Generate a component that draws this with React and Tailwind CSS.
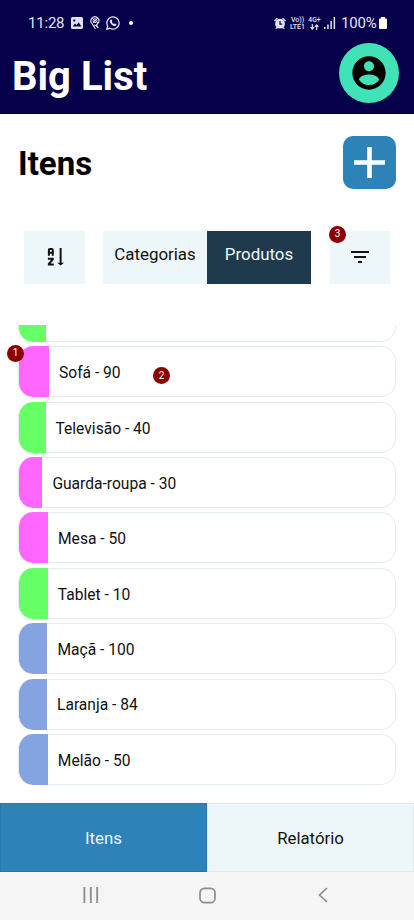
import React from "react";

const items = [
  { label: "Sofá - 90", color: "bg-[#ff66ff]", width: "w-[31px]" },
  { label: "Televisão - 40", color: "bg-[#66ff66]", width: "w-[27.5px]" },
  { label: "Guarda-roupa - 30", color: "bg-[#ff66ff]", width: "w-[24.4px]" },
  { label: "Mesa - 50", color: "bg-[#ff66ff]", width: "w-[30px]" },
  { label: "Tablet - 10", color: "bg-[#66ff66]", width: "w-[29.8px]" },
  { label: "Maçã - 100", color: "bg-[#85a3e0]", width: "w-[29.4px]" },
  { label: "Laranja - 84", color: "bg-[#85a3e0]", width: "w-[29px]" },
  { label: "Melão - 50", color: "bg-[#85a3e0]", width: "w-[29.8px]" },
];

function Marker({ children, place }) {
  return (
    <span
      className={`absolute flex h-[17px] w-[17px] items-center justify-center rounded-full bg-[#8b0000] text-[10px] leading-none text-white ${place}`}
    >
      {children}
    </span>
  );
}

function ItemCard({ label, color, width }) {
  return (
    <div className="flex h-[51px] w-full shrink-0">
      <div className={`shrink-0 rounded-l-[15px] border-l border-[#e4ecee] ${color} ${width}`} />
      <div className="flex flex-1 items-center rounded-r-[15px] border border-l-0 border-[#e4ecee] pl-[10px] pt-[4px] text-[15.600px]">
        {label}
      </div>
    </div>
  );
}

function StatusBar() {
  return (
    <div className="flex h-[46px] items-center pl-[28px] pr-[27px] text-[15.5px] text-[#e4e0f4]">
      <span className="mt-[1px] w-[43px] text-[15px] tracking-[-0.2px]">11:28</span>
      <svg className="h-3 w-3" viewBox="0 0 12 12" fill="currentColor">
        <path fillRule="evenodd" d="M1.5 0h9A1.5 1.5 0 0 1 12 1.500v9a1.500 1.500 0 0 1-1.500 1.500h-9A1.500 1.500 0 0 1 0 10.500v-9A1.500 1.500 0 0 1 1.500 0zM1.700 9.500h8.700L7.700 5.300 5.500 8 4 6.500zM2.300 2.500v2h1.900v-2z" />
      </svg>
      <svg className="ml-[7px] h-[14px] w-[10px]" viewBox="0 0 10 14" fill="none" stroke="currentColor">
        <path strokeWidth="1.200" d="M5.500 13 2 7.600A4 4 0 1 1 8.600 6.500L6 9.500 8.300 12" />
        <circle cx="5" cy="4.600" r="1.900" />
        <path d="M2 2l6 5M7.500 2 3 7.200M4 9l3.500 1" />
      </svg>
      <svg className="ml-[6px] h-[14px] w-[14px]" viewBox="0 0 14 14" fill="none" stroke="currentColor">
        <path strokeWidth="1.300" d="M.8 13.200 1.700 10A6.100 6.100 0 1 1 4 12.300z" />
        <path fill="currentColor" stroke="none" d="M4.600 3.700c.4-.4 1-.3 1.200.2l.5 1.100c.1.300-.4.800-.4 1 .4.900 1.100 1.600 2 2 .3.100.7-.6 1-.5l1.200.6c.5.300.2 1-.2 1.400-.6.600-1.500.7-2.600.2C5.700 9 4.600 7.900 4 6.300c-.3-1-.2-2 .6-2.600z" />
      </svg>
      <span className="ml-[9px] h-[4px] w-[4px] rounded-full bg-white" />
      <svg className="ml-auto h-[13px] w-[12px]" viewBox="0 0 12 13">
        <g fill="currentColor">
          <circle cx="6" cy="6.700" r="4.900" />
          <path d="M0 3.500 3 .8l1 1L.8 4.500zM12 3.500 9 .8l-1 1 3.200 2.700zM1 12.200l1.800-2.500 1.500 1.200zM11 12.200 9.200 9.700l-1.500 1.200z" />
        </g>
        <path d="M6 3.900v3.200h2.200" fill="none" stroke="#06004b" strokeWidth="1.200" />
      </svg>
      <span className="ml-[3.5px] mt-[2px] flex w-[16px] flex-col items-center gap-[0.5px] text-[7px] font-medium leading-[7px]">
        <span className="block h-[7px]">Vo))</span>
        <span className="block h-[7px]">LTE1</span>
      </span>
      <span className="ml-[2.5px] flex w-[13px] flex-col items-center text-[6.800px] font-medium leading-[7px]">
        <span>4G+</span>
        <svg className="h-[6px] w-[9px]" viewBox="0 0 9 6" fill="none" stroke="currentColor" strokeWidth="1.200">
          <path d="M2.300 0v5M.5 3.200l1.800 1.900 1.800-1.900M6.700 6V1M4.900 2.800 6.700.9l1.800 1.900" />
        </svg>
      </span>
      <svg className="ml-[3px] h-3 w-[12px]" viewBox="0 0 12 12" fill="currentColor">
        <path d="M0 10h1.500v2H0zM3.200 7.500h1.500V12H3.200zM6.400 4h1.500v8H6.400zM9.600 0h1.500v12H9.600z" />
      </svg>
      <span className="ml-[5px] w-[36px] whitespace-nowrap text-[15px] tracking-[-0.200px]">100%</span>
      <svg className="ml-[2px] h-[12px] w-[8px]" viewBox="0 0 8 12" fill="white">
        <path d="M2 0h4v1.400h1a1 1 0 0 1 1 1V11a1 1 0 0 1-1 1H1a1 1 0 0 1-1-1V2.400a1 1 0 0 1 1-1h1z" />
      </svg>
    </div>
  );
}

export default function App() {
  return (
    <div className="flex h-[920px] w-[414px] flex-col overflow-hidden bg-white font-['Roboto',sans-serif] text-[#111]">
      <header className="h-[114px] shrink-0 bg-[#06004b]">
        <StatusBar />
        <div className="flex items-start justify-between pl-[12px] pr-[15px]">
          <h1 className="mt-[7px] text-[40px] font-bold leading-[48px] text-white">Big List</h1>
          <button className="-mt-[3px] flex h-[60px] w-[60px] items-center justify-center rounded-full bg-[#42e2b8]">
            <svg className="h-10 w-10" viewBox="0 0 24 24" fill="black">
              <path d="M12 2C6.480 2 2 6.480 2 12s4.480 10 10 10 10-4.480 10-10S17.520 2 12 2zm0 3c1.660 0 3 1.340 3 3s-1.340 3-3 3-3-1.340-3-3 1.340-3 3-3zm0 14.200c-2.500 0-4.710-1.280-6-3.220.03-1.990 4-3.080 6-3.080 1.990 0 5.970 1.090 6 3.080-1.290 1.940-3.500 3.220-6 3.220z" />
            </svg>
          </button>
        </div>
      </header>

      <div className="flex h-[116.500px] shrink-0 items-start justify-between px-[18px] pt-[22px]">
        <h2 className="mt-[8px] text-[33px] font-bold leading-[40px] text-black">Itens</h2>
        <button className="flex h-[53px] w-[53px] items-center justify-center rounded-[10px] bg-[#2d82b7]">
          <svg className="h-[31px] w-[31px]" viewBox="0 0 31 31" fill="white">
            <path d="M13.200 0h4.600v13.200H31v4.600H17.800V31h-4.600V17.800H0v-4.600h13.200z" />
          </svg>
        </button>
      </div>

      <div className="flex h-[53px] shrink-0 px-[24px] text-[16.900px]">
        <button className="flex w-[60.500px] items-center justify-center bg-[#edf6f9]">
          <svg className="h-[23.500px] w-[23.500px]" viewBox="0 0 24 24" fill="#111">
            <path d="M19 18h2.500L18 21l-3.500-3H17V3h2M11 13v2l-3.330 4H11v2H5v-2l3.330-4H5v-2M9 3H7c-1.100 0-2 .9-2 2v6h2V9h2v2h2V5c0-1.100-.89-2-2-2m0 4H7V5h2z" />
          </svg>
        </button>
        <button className="ml-[18.500px] w-[104px] bg-[#edf6f9] pb-[4px] text-center">Categorias</button>
        <button className="w-[104px] bg-[#1f3a4d] pb-[4px] text-center text-[#edf6f9]">Produtos</button>
        <button className="relative ml-[18.500px] flex w-[60.500px] items-center justify-center bg-[#edf6f9]">
          <svg className="h-6 w-6" viewBox="0 0 24 24" fill="#111">
            <path d="M10 18h4v-2h-4v2zM3 6v2h18V6H3zm3 7h12v-2H6v2z" />
          </svg>
          <Marker place="-left-[0.5px] -top-[5px]">3</Marker>
        </button>
      </div>

      <div className="mt-[41.500px] flex h-[478px] shrink-0 flex-col px-[18px]">
        <div className="flex h-[17px] shrink-0 items-end overflow-hidden">
          <ItemCard label="" color="bg-[#66ff66]" width="w-[28px]" />
        </div>
        {items.map((item, i) => (
          <div key={item.label} className="relative mt-[4.360px] h-[51px] shrink-0">
            <ItemCard {...item} />
            {i === 0 && (
              <>
                <Marker place="-left-[11px] -top-[1.500px]">1</Marker>
                <Marker place="left-[135px] top-[20.700px]">2</Marker>
              </>
            )}
          </div>
        ))}
      </div>

      <nav className="flex h-[69px] shrink-0 text-[16.800px]">
        <button className="w-[207px] border border-[#2779ad] bg-[#2d82b7] pt-[2px] text-[#edf6f9]">Itens</button>
        <button className="w-[207px] border border-[#dcebf2] bg-[#edf6f9] pt-[2px]">Relatório</button>
      </nav>

      <div className="grid flex-1 grid-cols-[183px_48px_183px] items-center bg-[#f5f5f5] pb-[2px] text-[#8c8c8c]">
        <svg className="ml-[83px] h-4 w-4" viewBox="0 0 16 16" fill="currentColor">
          <path d="M.500 0h1.800v16H.500zM6.900 0h1.800v16H6.900zM13.300 0h1.800v16h-1.800z" />
        </svg>
        <svg className="h-[17px] w-[17px] justify-self-center" viewBox="0 0 17 17" fill="none" stroke="currentColor" strokeWidth="1.700">
          <rect x="1" y="1.300" width="15" height="14.400" rx="4.500" />
        </svg>
        <svg className="ml-[87px] h-[16px] w-[10px]" viewBox="0 0 10 16" fill="none" stroke="currentColor" strokeWidth="1.700">
          <path d="M9 1 1.500 8 9 15" />
        </svg>
      </div>
    </div>
  );
}
